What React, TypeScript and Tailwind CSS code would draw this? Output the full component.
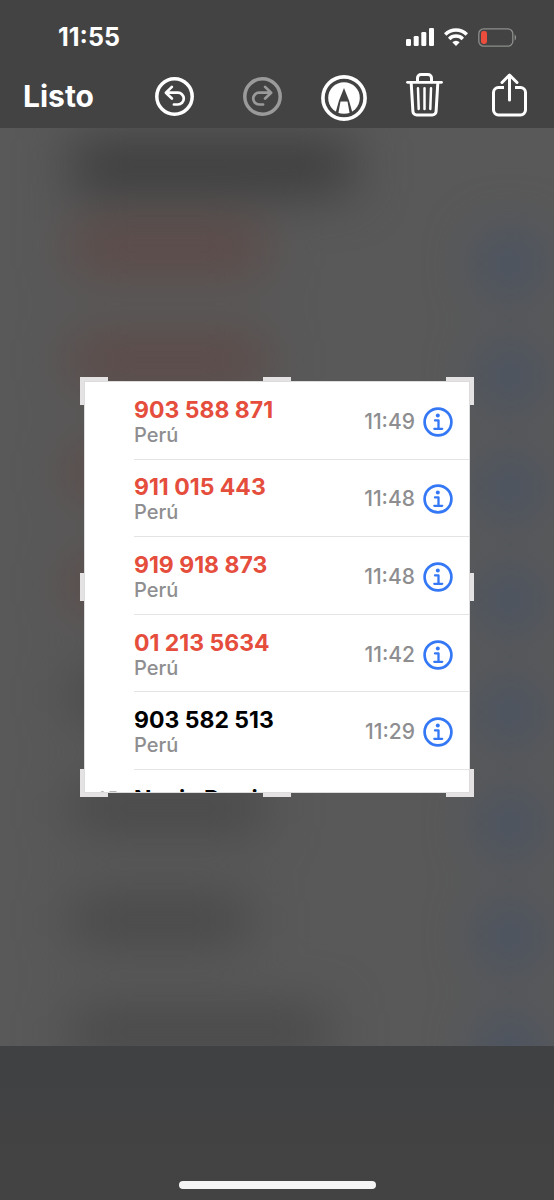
import type { ReactNode } from "react";
import { clsx } from "clsx";

type Call = {
  name: string;
  place: string;
  time: string;
  missed: boolean;
};

const CALLS: Call[] = [
  { name: "903 588 871", place: "Perú", time: "11:49", missed: true },
  { name: "911 015 443", place: "Perú", time: "11:48", missed: true },
  { name: "919 918 873", place: "Perú", time: "11:48", missed: true },
  { name: "01 213 5634", place: "Perú", time: "11:42", missed: true },
  { name: "903 582 513", place: "Perú", time: "11:29", missed: false },
];

// Colour and width of each smudge in the blurred backdrop, top to bottom
const SMUDGES = [
  "bg-[#5e4744] w-48",
  "bg-[#5e4744] w-48",
  "bg-[#5e4744] w-48",
  "bg-[#5e4744] w-48",
  "bg-[#464646] w-48",
  "bg-[#464646] w-48",
  "bg-[#464646] w-44",
  "bg-[#464646] w-64",
];

// ── Status bar ────────────────────────────────────────────────────────────────

function SignalIcon() {
  return (
    <svg width="28" height="18" viewBox="0 0 28 18" fill="#fff" aria-hidden="true">
      <rect x="0" y="11" width="5" height="7" rx="1.3" />
      <rect x="7.7" y="8" width="5" height="10" rx="1.3" />
      <rect x="15.3" y="4" width="5" height="14" rx="1.3" />
      <rect x="23" y="0" width="5" height="18" rx="1.3" />
    </svg>
  );
}

function WifiIcon() {
  return (
    <svg width="24" height="18" viewBox="0 0 24 18" fill="none" stroke="#fff" strokeWidth="3.5" aria-hidden="true">
      <path d="M1.2 6.4a15.4 15.4 0 0 1 21.6 0" />
      <path d="M5.2 10.9a9.7 9.7 0 0 1 13.6 0" />
      <path d="M12 18l-3.7-3.7a5.2 5.2 0 0 1 7.4 0z" fill="#fff" stroke="none" />
    </svg>
  );
}

function BatteryIcon() {
  return (
    <svg width="39" height="19" viewBox="0 0 39 19" fill="none" aria-hidden="true">
      <rect x="0.8" y="0.8" width="34" height="17.4" rx="5" stroke="#8c8f8c" strokeWidth="1.3" />
      <rect x="3" y="3" width="6" height="13" rx="2.4" fill="#eb4d3d" />
      <path d="M36.6 6.5c2 .7 2 5.3 0 6z" fill="#8c8f8c" />
    </svg>
  );
}

function StatusBar() {
  return (
    <div className="flex h-[66px] items-center justify-between pt-2 pr-[37px] pl-[58px]">
      <span className="text-[25px] leading-7 font-bold">11:55</span>
      <div className="flex items-center gap-[10px]">
        <SignalIcon />
        <WifiIcon />
        <BatteryIcon />
      </div>
    </div>
  );
}

// ── Toolbar ───────────────────────────────────────────────────────────────────

function TurnIcon({ flipped }: { flipped?: boolean }) {
  return (
    <svg
      width="39"
      height="39"
      viewBox="0.5 0.5 39 39"
      fill="none"
      stroke="currentColor"
      strokeLinecap="round"
      strokeLinejoin="round"
      className={clsx(flipped && "-scale-x-100")}
      aria-hidden="true"
    >
      <circle cx="20" cy="20" r="17.7" strokeWidth="3.5" />
      <path d="M17.4 10.4l-6 5.8 6 5.8M11.8 16.2h11.6a5.9 5.9 0 0 1 0 11.8h-4" strokeWidth="2.7" />
    </svg>
  );
}

function MarkerIcon() {
  return (
    <svg width="46" height="50" viewBox="0 -4 46 50" aria-hidden="true">
      <circle cx="23" cy="23" r="21.1" fill="none" stroke="#fff" strokeWidth="3.6" />
      <circle cx="23" cy="23" r="15.8" fill="#fff" />
      <path d="M23 13l5 12.5L31.5 38l-2.7 1.2-2.3-12.7h-7l-2.3 12.7-2.7-1.2L18 25.5z" fill="#434343" />
    </svg>
  );
}

function TrashIcon() {
  return (
    <svg width="37" height="47" viewBox="0 0 37 47" fill="none" stroke="#fff" strokeLinecap="round" aria-hidden="true">
      <path d="M1.5 9.3h34" strokeWidth="2.8" />
      <path d="M11.5 8.5V5A3.5 3.5 0 0 1 15 1.5h7A3.5 3.5 0 0 1 25.5 5v3.5" strokeWidth="3" />
      <path d="M5.2 10l1.7 28.4a3.8 3.8 0 0 0 3.8 3.6h15.6a3.8 3.8 0 0 0 3.8-3.6L31.8 10" strokeWidth="3" />
      <path d="M12 15.3l.7 20.6M18.5 15.3v20.6M25 15.3l-.7 20.6" strokeWidth="2.5" />
    </svg>
  );
}

function ShareIcon() {
  return (
    <svg width="35" height="47" viewBox="0 0 35 47" fill="none" stroke="#fff" strokeWidth="3" aria-hidden="true">
      <path d="M12 14.5H6.5a5 5 0 0 0-5 5V37a5 5 0 0 0 5 5h22a5 5 0 0 0 5-5V19.5a5 5 0 0 0-5-5H23" />
      <path d="M17.5 27V2.5M10 9.5L17.5 2 25 9.5" strokeLinecap="round" strokeLinejoin="round" />
    </svg>
  );
}

function ToolButton({ label, className, disabled, children }: {
  label: string;
  className?: string;
  disabled?: boolean;
  children: ReactNode;
}) {
  return (
    <button type="button" aria-label={label} disabled={disabled} className={clsx("shrink-0", className)}>
      {children}
    </button>
  );
}

function Toolbar() {
  return (
    <div className="flex h-[62px] items-center justify-between pr-[27px] pb-0.5 pl-[23px]">
      <button type="button" className="text-[30px] leading-8 font-bold">Listo</button>
      <div className="flex items-center gap-[39px]">
        <ToolButton label="Deshacer" className="mr-[10px]"><TurnIcon /></ToolButton>
        <ToolButton label="Rehacer" className="text-[#9a9a9a]" disabled><TurnIcon flipped /></ToolButton>
        <ToolButton label="Marcador"><MarkerIcon /></ToolButton>
        <ToolButton label="Eliminar"><TrashIcon /></ToolButton>
        <ToolButton label="Compartir" className="ml-[10px]"><ShareIcon /></ToolButton>
      </div>
    </div>
  );
}

// ── Cropped call list ─────────────────────────────────────────────────────────

function InfoIcon() {
  return (
    <svg width="30" height="30" viewBox="0 0 30 30" fill="none" stroke="#3478f6" aria-hidden="true">
      <circle cx="15" cy="15" r="13.4" strokeWidth="2.7" />
      <circle cx="14.8" cy="8.4" r="2" fill="#3478f6" stroke="none" />
      <path d="M12 13.4h3.5v8.2M11.3 21.8h7.9" strokeWidth="2.3" strokeLinecap="round" strokeLinejoin="round" />
    </svg>
  );
}

function OutgoingIcon() {
  return (
    <svg width="20" height="20" viewBox="0 0 20 20" fill="#b4b4b6" aria-hidden="true">
      <path d="M1.5 3.5C3 .2 5.6.2 7 3l1.5 3.2c.4 1-.9 2-1.4 2.8 1 2 2.6 3.5 4.5 4.4.8-.6 1.6-1.8 2.8-1.3l3 1.7c1.4 1 .6 3.2-1.4 4.3C9.5 20.5-1 10 1.5 3.5z" />
      <path d="M11 1h7.5v7.5L16 6l-3.5 3.5-2-2L14 4z" />
    </svg>
  );
}

function CallRow({ call }: { call: Call }) {
  return (
    <li className="flex pl-[49px]">
      <div className="flex flex-1 items-center gap-2 border-b border-[#e4e4e6] pt-[3px] pr-4">
        <div className="min-w-0 flex-1">
          <p className={clsx("text-[23px] leading-[26px] font-bold", call.missed ? "text-[#e54d3c]" : "text-black")}>
            {call.name}
          </p>
          <p className="text-[20px] leading-6 font-medium text-[#8e8e91]">{call.place}</p>
        </div>
        <time className="text-[21px] leading-6 font-medium text-[#8e8e91]">{call.time}</time>
        <button type="button" aria-label={`Información de ${call.name}`}>
          <InfoIcon />
        </button>
      </div>
    </li>
  );
}

function CropHandles() {
  const handle = "absolute border-[#e4e2e3]";
  return (
    <div className="pointer-events-none absolute inset-0" aria-hidden="true">
      <span className={clsx(handle, "top-0 left-0 size-7 border-t-4 border-l-4")} />
      <span className={clsx(handle, "top-0 right-0 size-7 border-t-4 border-r-4")} />
      <span className={clsx(handle, "bottom-0 left-0 size-7 border-b-4 border-l-4")} />
      <span className={clsx(handle, "right-0 bottom-0 size-7 border-r-4 border-b-4")} />
      <span className={clsx(handle, "inset-x-0 top-0 mx-auto w-7 border-t-4")} />
      <span className={clsx(handle, "inset-x-0 bottom-0 mx-auto w-7 border-b-4")} />
      <span className={clsx(handle, "inset-y-0 left-0 my-auto h-7 border-l-4")} />
      <span className={clsx(handle, "inset-y-0 right-0 my-auto h-7 border-r-4")} />
    </div>
  );
}

function CropFrame() {
  return (
    <section className="relative mx-20 p-1" aria-label="Recorte">
      <div className="h-[412px] overflow-hidden border border-[#dcdcdc] bg-white">
        <ul className="grid h-[388px] grid-rows-5">
          {CALLS.map((call) => (
            <CallRow key={call.name} call={call} />
          ))}
        </ul>
        {/* Next entry, cut off by the crop edge */}
        <div className="flex items-start pt-4">
          <div className="flex w-[49px] justify-center pt-1 pr-1"><OutgoingIcon /></div>
          <p className="text-[23px] leading-[26px] font-bold text-black">Novia Perri</p>
        </div>
      </div>
      <CropHandles />
    </section>
  );
}

function Backdrop() {
  return (
    <div className="absolute inset-0 overflow-hidden" aria-hidden="true">
      <div className="flex flex-col pl-[72px] blur-[26px]">
        <div className="mt-3 h-[52px] w-[280px] bg-[#3b3b3b]" />
        {SMUDGES.map((smudge, i) => (
          <div key={i} className="flex h-28 items-center justify-between pr-3">
            <span className={clsx("h-11", smudge)} />
            <span className="mt-8 size-16 rounded-full bg-[#475264]" />
          </div>
        ))}
      </div>
    </div>
  );
}

export default function App() {
  return (
    <div className="flex min-h-screen flex-col bg-[#434343] font-['Inter','Liberation_Sans',sans-serif] text-white">
      <header>
        <StatusBar />
        <Toolbar />
      </header>
      <main className="relative flex-1 bg-[#595959] pt-[249px]">
        <Backdrop />
        <CropFrame />
      </main>
      <footer className="flex h-[154px] items-end justify-center bg-gradient-to-b from-[#404143] to-[#434343] pb-[11px]">
        <div className="h-2 w-[197px] rounded-full bg-[#f5f5f5]" />
      </footer>
    </div>
  );
}
